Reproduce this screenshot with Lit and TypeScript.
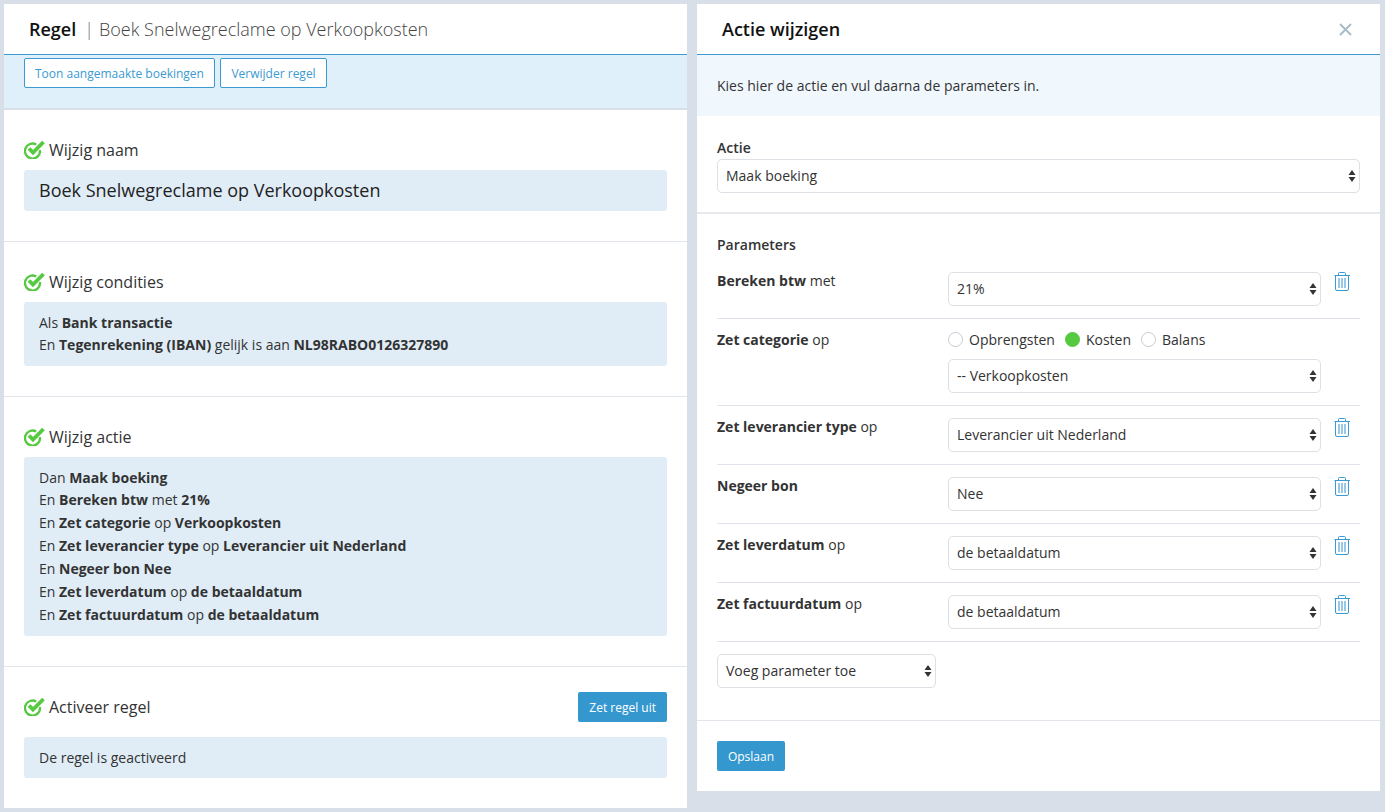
import { LitElement, html, css } from "lit";
import { customElement } from "lit/decorators.js";

const check = html`<svg class="chk" width="21" height="19" viewBox="0 0 21 19" fill="none">
  <path d="M16 10v1a7.500 7.500 0 1 1-3.800-6.500" stroke="#55c93f" stroke-width="2.300"/>
  <path d="M5 8.500 9 12.500 19.500 2" stroke="#55c93f" stroke-width="3.800"/>
</svg>`;

const trash = html`<svg class="trash" width="17" height="19" viewBox="0 0 17 19" fill="none">
  <path d="M.5 3.500h15.500" stroke="#3a9ad1"/>
  <path d="M4.500 3.500V1.500q0-1 1-1h5q1 0 1 1v2" stroke="#3a9ad1"/>
  <path d="M1.500 3.500v13.500q0 1.500 1.500 1.500h10q1.500 0 1.500-1.500V3.500" stroke="#3a9ad1"/>
  <path d="M5 6v10M8 6v10M11 6v10" stroke="#98c8e7" stroke-width="2"/>
</svg>`;

const arrows = html`<svg class="arr" width="8" height="14" viewBox="0 0 8 14"><path d="M4 1 7.500 6H.500zM4 13 .500 8h7z" fill="#333"/></svg>`;

const sel = (t: string, cls = "") => html`<div class="select ${cls}"><span>${t}</span>${arrows}</div>`;

@customElement("app-root")
export class AppRoot extends LitElement {
  static styles = css`
    :host { display: block; width: 1385px; height: 812px; background: #d9dfe8; font-family: "Open Sans", sans-serif; color: #333; font-size: 14px; overflow: hidden; }
    * { box-sizing: border-box; }
    .page { display: flex; align-items: flex-start; gap: 10px; padding: 4px 5px 0 4px; }
    .panel { background: #fff; }
    .left { width: 683px; height: 804px; }
    .right { width: 683px; height: 787px; flex: none; }
    .hdr { height: 51px; border-bottom: 1px solid #3a9ad1; display: flex; align-items: center; padding-left: 25px; font-size: 18px; font-weight: 300; color: #444; }
    .hdr b { font-size: 18px; font-weight: 600; color: #111; }
    .hdr .sep { margin: 0 5px 0 8px; color: #777; font-size: 18px; }
    .toolbar { height: 55px; background: #e0f0fa; border-bottom: 2px solid #d9dfe8; padding: 3px 20px 0; display: flex; gap: 5px; align-items: flex-start; }
    .obtn { height: 30px; border: 1px solid #3a9ad1; border-radius: 2px; background: #fff; color: #3a9ad1; font-size: 12px; padding: 0 10px; display: flex; align-items: center; }
    .obtn.wide { padding: 0 10.500px; }
    section { padding: 0 20px; border-bottom: 1px solid #e2e5ec; }
    .s1 { height: 132px; padding-top: 30px; }
    .s2 { height: 155px; padding-top: 30px; }
    .s3 { height: 270px; padding-top: 30px; }
    .s4 { padding-top: 25px; border-bottom: none; }
    .title { height: 20px; margin-bottom: 10px; display: flex; align-items: center; gap: 4px; font-size: 16px; font-weight: 400; color: #333; }
    .title .chk { margin-top: -2px; }
    .row4 { display: flex; justify-content: space-between; align-items: center; height: 30px; margin-bottom: 15px; }
    .row4 .title { margin-bottom: 0; }
    .box { background: #e0edf7; border-radius: 3px; padding: 10px 15px; line-height: 22px; font-size: 14px; color: #333; }
    .box b { font-weight: 700; }
    .s3 .box { line-height: 22.850px; padding: 9.500px 15px; }
    .name { font-size: 18px; line-height: 21px; color: #222; }
    .s4 .box { line-height: 21px; }
    .fbtn { height: 30px; background: #3498cf; color: #fff; border-radius: 2px; font-size: 12px; font-weight: 400; padding: 0 11px; display: flex; align-items: center; }
    .rhdr { height: 51px; border-bottom: 1px solid #3a9ad1; display: flex; align-items: center; justify-content: space-between; padding: 0 28px 0 25px; font-size: 18px; font-weight: 600; color: #111; }
    .intro { height: 61px; background: #f0f8fe; padding: 0 20px; display: flex; align-items: center; color: #333; }
    .act { height: 98px; padding: 21px 20px 0; border-bottom: 2px solid #e6e8ec; }
    .lab { font-weight: 600; line-height: 22px; height: 22px; }
    .select { height: 34px; border: 1px solid #dcdfe4; border-radius: 5px; background: #fff; display: flex; align-items: center; justify-content: space-between; padding: 0 3px 0 8px; color: #333; }
    .select span { padding-bottom: 2px; }
    .arr { flex: none; }
    .params { padding: 20px 20px 0; }
    .ph { font-weight: 600; line-height: 22px; height: 22px; margin-bottom: 16px; }
    .prow { display: grid; grid-template-columns: 231px 373px 1fr; border-bottom: 1px solid #e2e2ec; height: 59px; padding-top: 12px; }
    .prow.first { height: 47px; padding-top: 0; }
    .prow.cat { height: 87px; padding-top: 10px; }
    .prow .l { line-height: 18px; }
    .prow .l b { font-weight: 700; }
    .prow.cat .l { padding-top: 2px; }
    .trash { margin: 0 0 0 13px; }
    .radios { display: flex; align-items: center; gap: 10px; height: 21px; margin-bottom: 9px; }
    .radio { display: flex; align-items: center; gap: 6px; }
    .dot { width: 15px; height: 15px; border-radius: 50%; border: 1px solid #c6ccd4; background: #fff; }
    .dot.on { background: #55c93f; border-color: #55c93f; }
    .add { width: 219px; margin-top: 12px; }
    .foot { margin-top: 32px; border-top: 1px solid #e2e5ec; padding: 20px 20px 0; }
    .foot .fbtn { width: 68px; padding: 0; justify-content: center; }
    .close { width: 13px; height: 13px; }
  `;

  private prow(l: unknown, v: string, cls = "") {
    return html`<div class="prow ${cls}"><div class="l">${l}</div>${sel(v)}${trash}</div>`;
  }

  render() {
    return html`<div class="page">
      <div class="panel left">
        <div class="hdr"><b>Regel</b><span class="sep">|</span>Boek Snelwegreclame op Verkoopkosten</div>
        <div class="toolbar"><div class="obtn">Toon aangemaakte boekingen</div><div class="obtn wide">Verwijder regel</div></div>
        <section class="s1">
          <div class="title">${check}Wijzig naam</div>
          <div class="box name">Boek Snelwegreclame op Verkoopkosten</div>
        </section>
        <section class="s2">
          <div class="title">${check}Wijzig condities</div>
          <div class="box">Als <b>Bank transactie</b><br>En <b>Tegenrekening (IBAN)</b> gelijk is aan <b>NL98RABO0126327890</b></div>
        </section>
        <section class="s3">
          <div class="title">${check}Wijzig actie</div>
          <div class="box">Dan <b>Maak boeking</b><br>En <b>Bereken btw</b> met <b>21%</b><br>En <b>Zet categorie</b> op <b>Verkoopkosten</b><br>En <b>Zet leverancier type</b> op <b>Leverancier uit Nederland</b><br>En <b>Negeer bon Nee</b><br>En <b>Zet leverdatum</b> op <b>de betaaldatum</b><br>En <b>Zet factuurdatum</b> op <b>de betaaldatum</b></div>
        </section>
        <section class="s4">
          <div class="row4"><div class="title">${check}Activeer regel</div><div class="fbtn">Zet regel uit</div></div>
          <div class="box">De regel is geactiveerd</div>
        </section>
      </div>
      <div class="panel right">
        <div class="rhdr">Actie wijzigen
          <svg class="close" viewBox="0 0 13 13"><path d="M1 1l11 11M12 1 1 12" stroke="#a9bcc9" stroke-width="2" fill="none"/></svg>
        </div>
        <div class="intro">Kies hier de actie en vul daarna de parameters in.</div>
        <div class="act"><div class="lab">Actie</div>${sel("Maak boeking")}</div>
        <div class="params">
          <div class="ph">Parameters</div>
          ${this.prow(html`<b>Bereken btw</b> met`, "21%", "first")}
          <div class="prow cat"><div class="l"><b>Zet categorie</b> op</div><div>
            <div class="radios">
              <div class="radio"><span class="dot"></span>Opbrengsten</div>
              <div class="radio"><span class="dot on"></span>Kosten</div>
              <div class="radio"><span class="dot"></span>Balans</div>
            </div>
            ${sel("-- Verkoopkosten")}
          </div><div></div></div>
          ${this.prow(html`<b>Zet leverancier type</b> op`, "Leverancier uit Nederland")}
          ${this.prow(html`<b>Negeer bon</b>`, "Nee")}
          ${this.prow(html`<b>Zet leverdatum</b> op`, "de betaaldatum")}
          ${this.prow(html`<b>Zet factuurdatum</b> op`, "de betaaldatum")}
          ${sel("Voeg parameter toe", "add")}
        </div>
        <div class="foot"><div class="fbtn">Opslaan</div></div>
      </div>
    </div>`;
  }
}
